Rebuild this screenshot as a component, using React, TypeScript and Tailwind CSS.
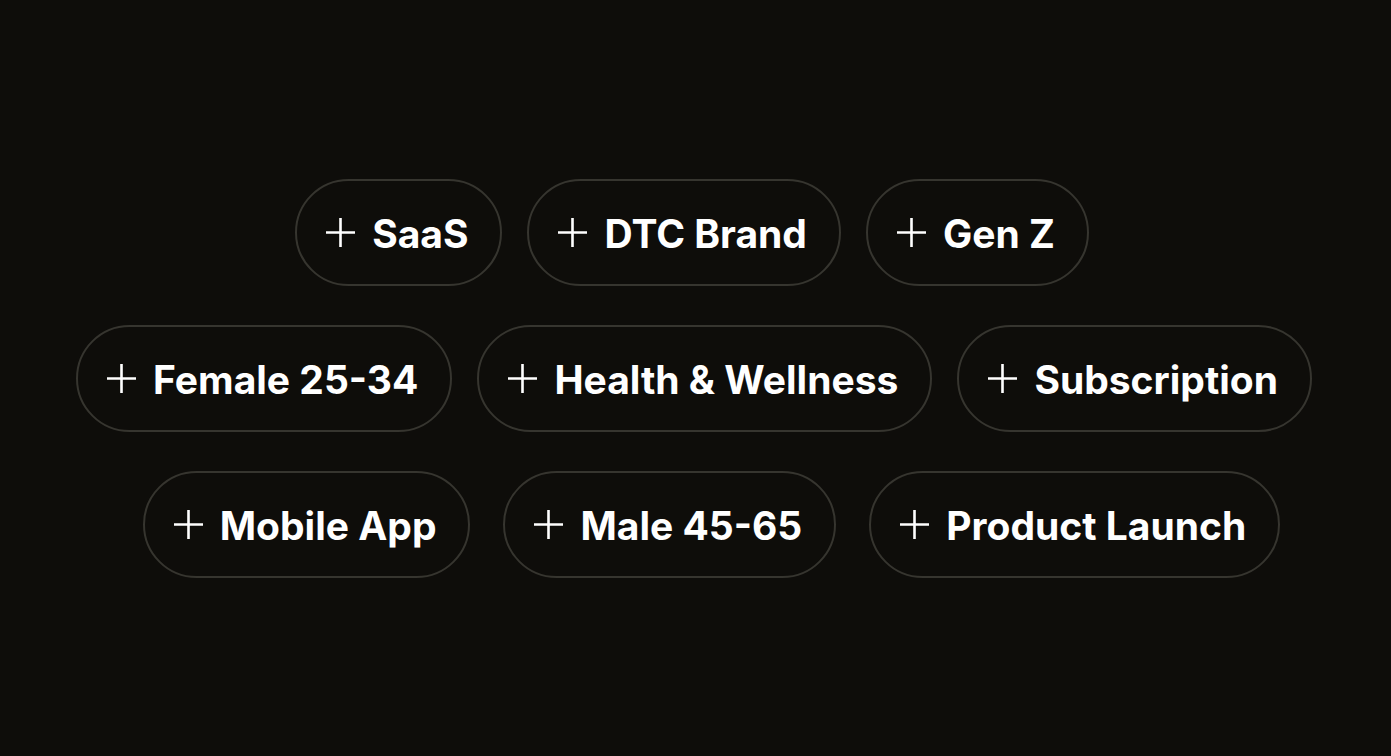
import { Plus } from 'lucide-react';

const rows: { tags: string[]; gap: string; shift: string }[] = [
  { tags: ['SaaS', 'DTC Brand', 'Gen Z'], gap: 'gap-[25px]', shift: '-ml-[7px]' },
  { tags: ['Female 25-34', 'Health & Wellness', 'Subscription'], gap: 'gap-[25px]', shift: '-ml-[3px]' },
  { tags: ['Mobile App', 'Male 45-65', 'Product Launch'], gap: 'gap-[33px]', shift: 'ml-[32px]' },
];

function Tag({ label }: { label: string }) {
  return (
    <button className="flex h-[107px] shrink-0 items-center gap-[17px] rounded-full border-2 border-[#36352f] bg-[#0e0d0a] pl-[29px] pr-[32px] text-[39px] font-bold text-white">
      <svg width="29" height="29" viewBox="0 0 29 29" className="shrink-0">
        <path d="M14.5 0v29M0 14.5h29" stroke="white" strokeWidth="2.6" />
      </svg>
      <span className="leading-none whitespace-nowrap pt-[2px]">{label}</span>
    </button>
  );
}

export default function App() {
  return (
    <div
      className="flex h-[756px] w-full flex-col items-center justify-center gap-[39px] bg-[#0e0d0a]"
      style={{ fontFamily: 'Inter, "Noto Sans", sans-serif' }}
    >
      {rows.map((row, i) => (
        <div key={i} className={`flex justify-center ${row.gap} ${row.shift}`}>
          {row.tags.map(t => (
            <Tag key={t} label={t} />
          ))}
        </div>
      ))}
    </div>
  );
}
